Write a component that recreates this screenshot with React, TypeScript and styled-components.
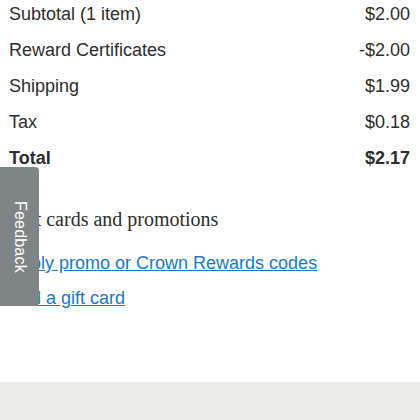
import React from "react";
import styled, { createGlobalStyle } from "styled-components";

const GlobalStyle = createGlobalStyle`
  html, body {
    margin: 0;
    padding: 0;
    background: #ffffff;
  }
  body {
    font-family: "Liberation Sans", Arial, sans-serif;
    color: #2d2d2d;
  }
`;

const Page = styled.div`
  display: flex;
  flex-direction: column;
  height: 420px;
  overflow: hidden;
`;

const Content = styled.div`
  flex-grow: 1;
  padding: 4px 10px 0 9px;
`;

const Summary = styled.div`
  display: flex;
  flex-direction: column;
`;

const Row = styled.div<{ $first?: boolean; $bold?: boolean }>`
  display: flex;
  justify-content: space-between;
  align-items: center;
  font-size: 18px;
  line-height: 20px;
  padding: ${(p) => (p.$first ? "0 0 8px" : "8px 0")};
  font-weight: ${(p) => (p.$bold ? 700 : 400)};
`;

const Heading = styled.h2`
  margin: 31px 0 0;
  font-family: "Liberation Serif", "Times New Roman", serif;
  font-weight: 400;
  font-size: 20px;
  line-height: 24px;
  color: #2d2d2d;
`;

const Links = styled.div`
  display: flex;
  flex-direction: column;
  gap: 15px;
  margin-top: 22px;
`;

const LinkText = styled.a`
  font-size: 18px;
  line-height: 20px;
  color: #1a78c8;
  text-decoration: underline;
  align-self: flex-start;
`;

const Footer = styled.div`
  height: 38px;
  background: #ebebea;
`;

const FeedbackTab = styled.div`
  position: fixed;
  left: 0;
  top: 167px;
  width: 39px;
  height: 139px;
  background: #7f8487;
  border-radius: 0 4px 4px 0;
  display: flex;
  align-items: center;
  justify-content: center;
`;

const FeedbackLabel = styled.span`
  writing-mode: vertical-rl;
  color: #ffffff;
  font-size: 16px;
  letter-spacing: 0.2px;
`;

const rows = [
  { label: "Subtotal (1 item)", value: "$2.00" },
  { label: "Reward Certificates", value: "-$2.00" },
  { label: "Shipping", value: "$1.99" },
  { label: "Tax", value: "$0.18" },
  { label: "Total", value: "$2.17", bold: true },
];

export default function App() {
  return (
    <Page>
      <GlobalStyle />
      <Content>
        <Summary>
          {rows.map((r, i) => (
            <Row key={r.label} $first={i === 0} $bold={r.bold}>
              <span>{r.label}</span>
              <span>{r.value}</span>
            </Row>
          ))}
        </Summary>
        <Heading>Gift cards and promotions</Heading>
        <Links>
          <LinkText href="#">Apply promo or Crown Rewards codes</LinkText>
          <LinkText href="#">Add a gift card</LinkText>
        </Links>
      </Content>
      <Footer />
      <FeedbackTab>
        <FeedbackLabel>Feedback</FeedbackLabel>
      </FeedbackTab>
    </Page>
  );
}
